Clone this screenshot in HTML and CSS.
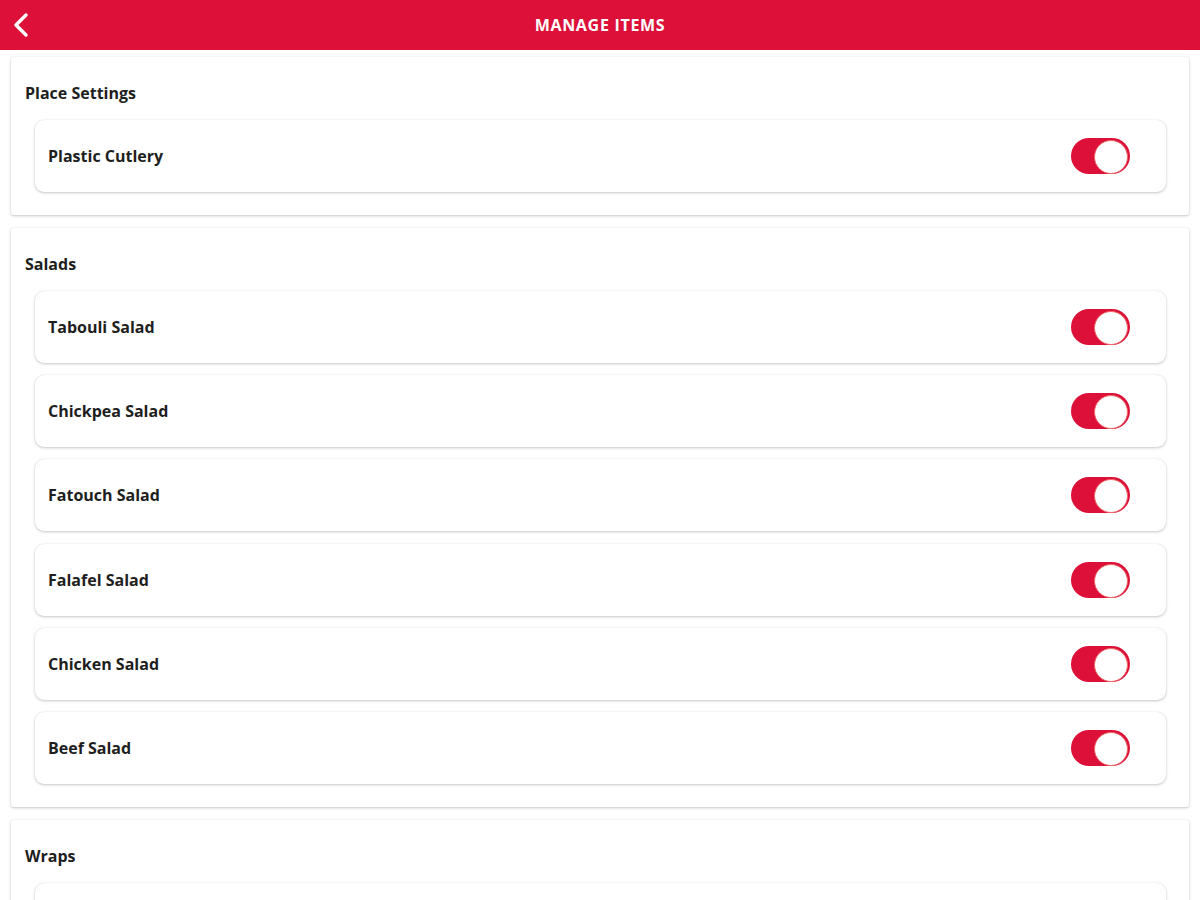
FILE: index.html
```html
<!doctype html>
<html lang="en">
<head>
<meta charset="utf-8">
<title>Manage Items</title>
<meta name="viewport" content="width=device-width,initial-scale=1">
<link rel="stylesheet" href="styles.css">
</head>
<body>

<!-- top bar -->
<header class="topbar">
  <button class="back" aria-label="Back">
    <svg width="18" height="26" viewBox="0 0 18 26"><path d="M14 3 L4 13 L14 23" fill="none" stroke="#fff" stroke-width="3.4" stroke-linecap="round" stroke-linejoin="round"/></svg>
  </button>
  <h1>MANAGE ITEMS</h1>
</header>

<main class="list">

  <section class="group">
    <h2>Place Settings</h2>
    <div class="item"><span>Plastic Cutlery</span><span class="toggle on"></span></div>
  </section>

  <section class="group">
    <h2>Salads</h2>
    <div class="item"><span>Tabouli Salad</span><span class="toggle on"></span></div>
    <div class="item"><span>Chickpea Salad</span><span class="toggle on"></span></div>
    <div class="item"><span>Fatouch Salad</span><span class="toggle on"></span></div>
    <div class="item"><span>Falafel Salad</span><span class="toggle on"></span></div>
    <div class="item"><span>Chicken Salad</span><span class="toggle on"></span></div>
    <div class="item"><span>Beef Salad</span><span class="toggle on"></span></div>
  </section>

  <section class="group">
    <h2>Wraps</h2>
    <div class="item"><span></span><span class="toggle on"></span></div>
  </section>

</main>
</body>
</html>
```

FILE: styles.css
```css
*{box-sizing:border-box;margin:0;padding:0}
html,body{
  height:100%;
  font-family:"Open Sans","Noto Sans","Liberation Sans",Arial,sans-serif;
  background:#fff;
  color:#1e1e1e;
  overflow:hidden;
}

/* ---------- top bar ---------- */
.topbar{
  height:50px;
  background:#dc1039;
  display:flex;
  align-items:center;
  justify-content:center;
  position:relative;
}
.topbar h1{
  font-size:16px;
  font-weight:700;
  color:#fff;
  letter-spacing:.7px;
}
.back{
  position:absolute;          /* sits over the bar, left */
  left:10px;top:12px;
  background:none;border:none;
  width:22px;height:26px;
  display:flex;align-items:center;justify-content:center;
}

/* ---------- groups ---------- */
.list{
  padding:7px 11px 0;
  display:flex;
  flex-direction:column;
  gap:12.6px;
}
.group{
  background:#fff;
  border-radius:2px;
  box-shadow:0 1px 3px rgba(0,0,0,.22),0 0 1px rgba(0,0,0,.12);
  padding:26px 23px 23px 24px;
  display:flex;
  flex-direction:column;
  gap:12.2px;
}
.group h2{
  font-size:16px;
  font-weight:700;
  line-height:20px;
  margin:0 0 5px -10px;
}
.item{
  height:72px;
  flex:none;
  border-radius:9px;
  background:#fff;
  box-shadow:0 1px 3px rgba(0,0,0,.22),0 0 1px rgba(0,0,0,.12);
  display:flex;
  align-items:center;
  justify-content:space-between;
  padding:0 36px 0 13px;
  font-size:16px;
  font-weight:700;
}

/* ---------- toggle ---------- */
.toggle{
  width:59px;height:36px;
  border-radius:18px;
  background:#dc1039;
  position:relative;
}
.toggle::after{
  content:"";
  position:absolute;
  top:2px;right:2px;
  width:32px;height:32px;
  border-radius:50%;
  background:#fff;
  border:1px solid #e66;
}
```
